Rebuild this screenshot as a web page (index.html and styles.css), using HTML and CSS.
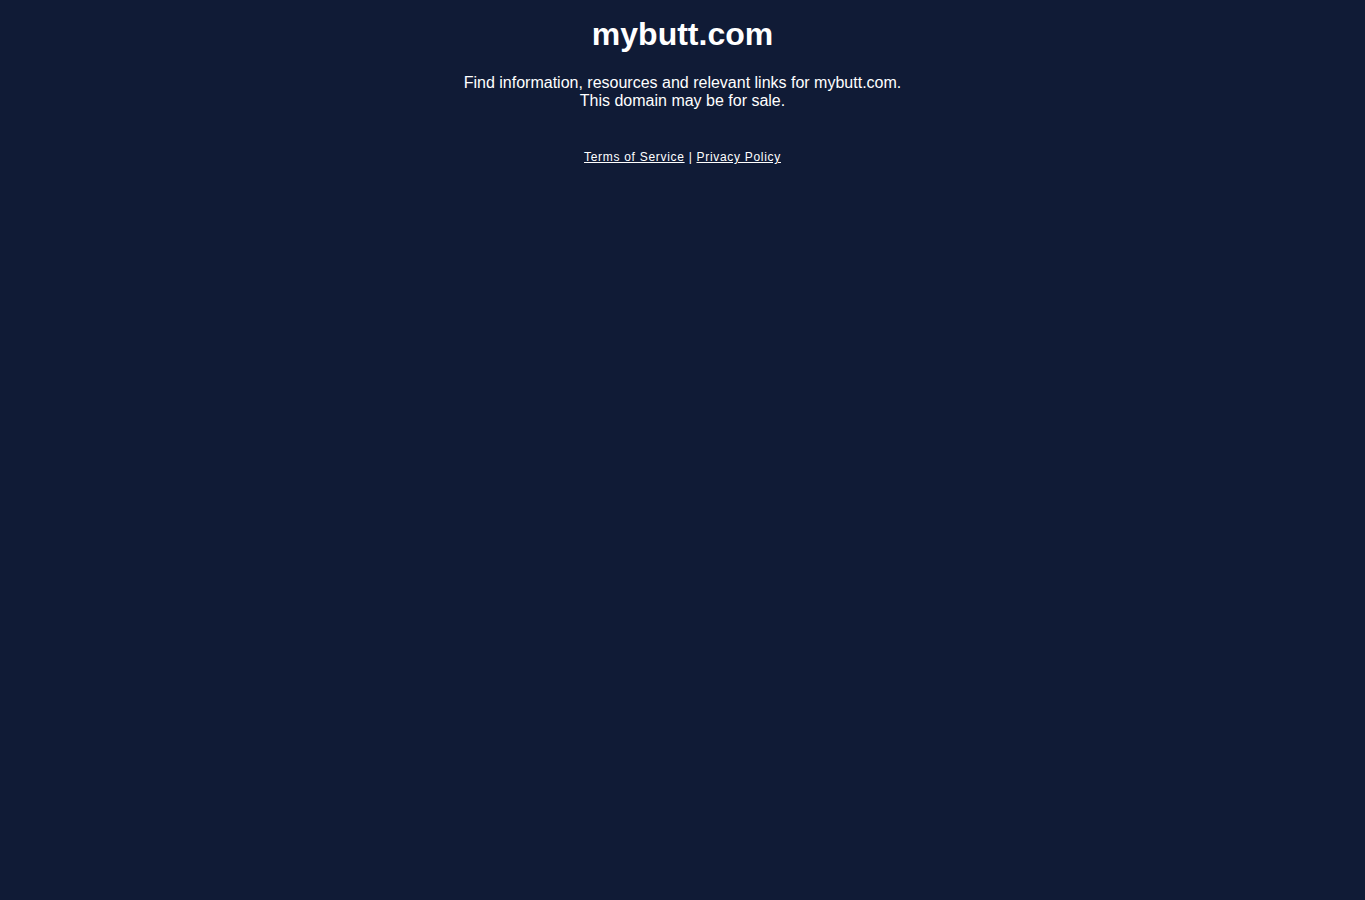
FILE: index.html
```html
<!DOCTYPE html>
<html>
<head>
<meta charset="utf-8">
<title>mybutt.com</title>
<link rel="stylesheet" href="styles.css">
</head>
<body>
<div class="page">
  <h1 class="title">mybutt.com</h1>
  <p class="desc">Find information, resources and relevant links for mybutt.com.<br>This domain may be for sale.</p>
  <div class="links"><a href="#">Terms of Service</a> | <a href="#">Privacy Policy</a></div>
</div>
</body>
</html>
```
FILE: styles.css
```css
html, body {
  margin: 0;
  padding: 0;
  background: #101b36;
  height: 100%;
}
body {
  font-family: "Liberation Sans", Arial, sans-serif;
  color: #ffffff;
}
.page {
  display: flex;
  flex-direction: column;
  align-items: center;
  text-align: center;
  padding-top: 16px;
}
.title {
  margin: 0;
  font-size: 32px;
  font-weight: bold;
  line-height: 37px;
}
.desc {
  margin: 21px 0 0;
  font-size: 16px;
  line-height: 18px;
}
.links {
  margin-top: 40px;
  font-size: 12px;
  line-height: 14px;
  letter-spacing: 0.7px;
}
.links a {
  color: #ffffff;
  text-decoration: underline;
}
```
